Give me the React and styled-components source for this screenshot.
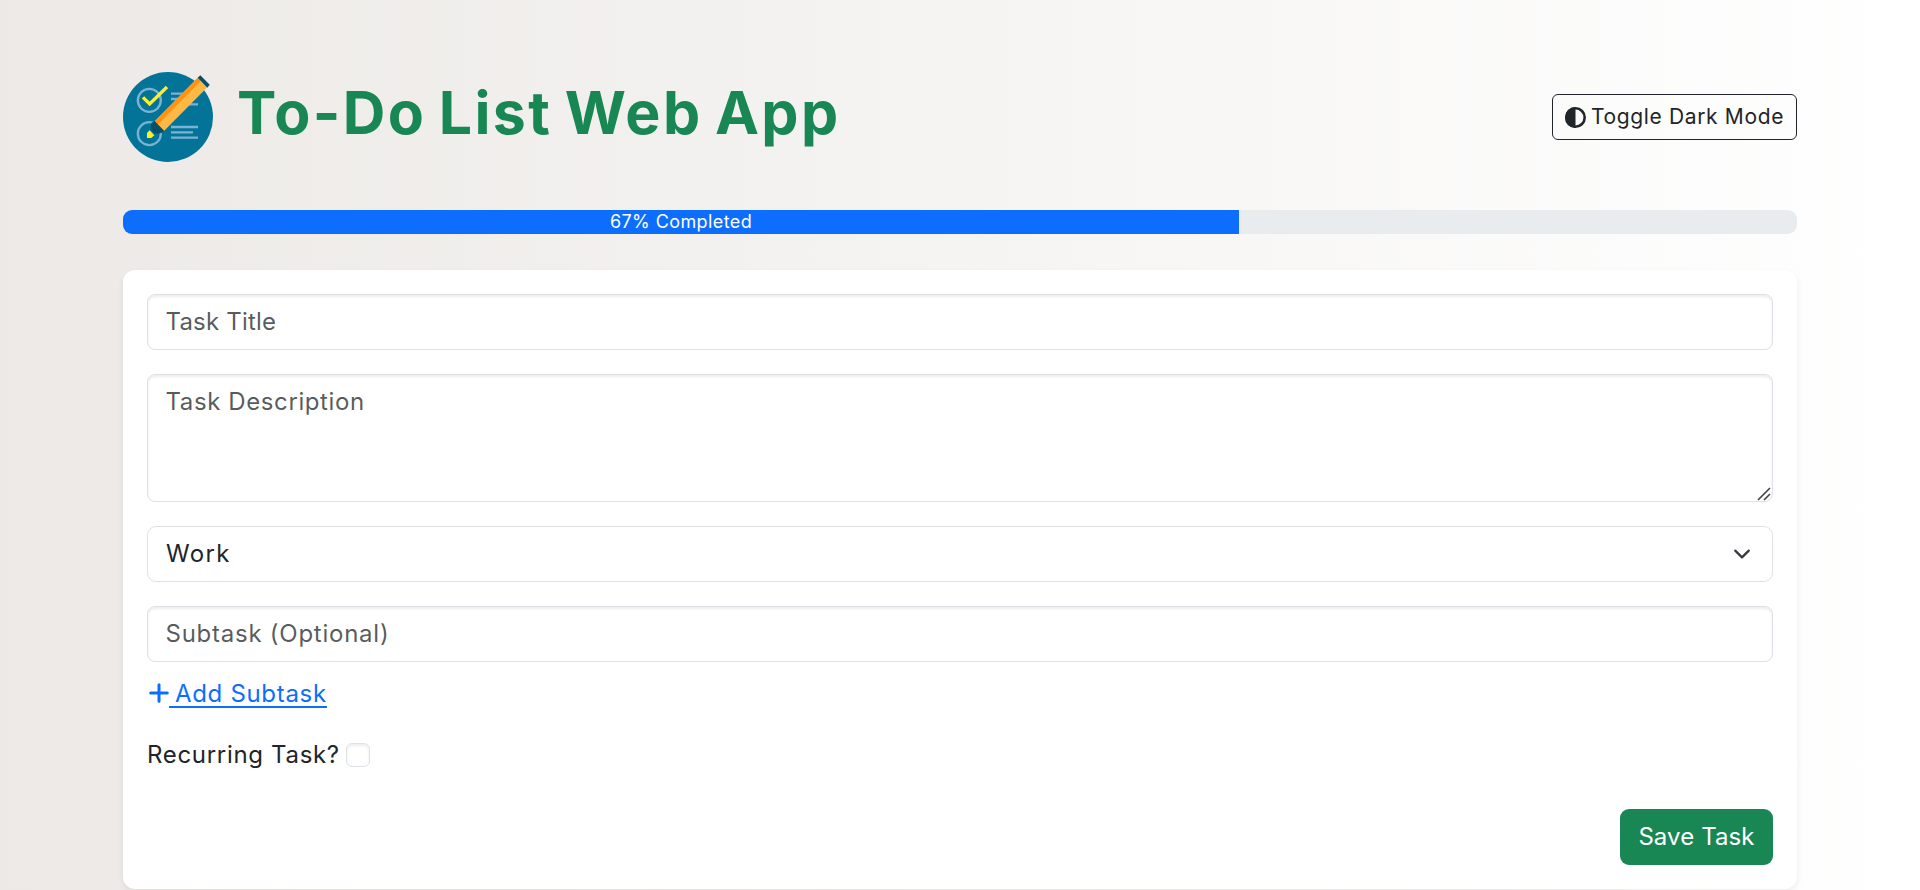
import React from 'react';
import styled, { createGlobalStyle } from 'styled-components';

const GlobalStyle = createGlobalStyle`
  *, *::before, *::after { box-sizing: border-box; }
  html, body { margin: 0; height: 100%; overflow: hidden; }
  body {
    font-family: Inter, "Open Sans", sans-serif;
    font-size: 24px;
    font-weight: 400;
    line-height: 36px;
    color: #212529;
    background: linear-gradient(to right, #ece9e6, #ffffff);
    min-height: 890px;
  }
`;

const Container = styled.div`
  width: 1674px;
  margin: 0 auto;
  padding-top: 72px;
`;

const Header = styled.header`
  display: flex;
  align-items: center;
  justify-content: space-between;
  height: 90px;
  margin-bottom: 48px;
`;

const Brand = styled.div`
  display: flex;
  align-items: center;
  gap: 24px;
`;

const Title = styled.h1`
  margin: 0 0 8px;
  font-size: 59px;
  font-weight: 700;
  line-height: 72px;
  letter-spacing: 2.4px;
  word-spacing: -4px;
  color: #198754;
`;

const ToggleButton = styled.button`
  display: flex;
  align-items: center;
  gap: 5px;
  width: 245px;
  height: 46px;
  padding: 0 0 0 12px;
  border: 1px solid #212529;
  border-radius: 6px;
  background: transparent;
  color: #212529;
  font: inherit;
  font-size: 21px;
  letter-spacing: 0.64px;
  white-space: nowrap;
`;

const Progress = styled.div`
  height: 24px;
  margin-bottom: 36px;
  border-radius: 9px;
  background: #e9ecef;
  overflow: hidden;
`;

const ProgressBar = styled.div`
  display: flex;
  align-items: center;
  justify-content: center;
  height: 100%;
  background: #0d6efd;
  color: #fff;
  font-size: 18px;
  letter-spacing: 0.4px;
`;

const Card = styled.form`
  display: flex;
  flex-direction: column;
  height: 619px;
  padding: 24px;
  border-radius: 12px;
  background: #fff;
  box-shadow: 0 3px 6px rgba(0, 0, 0, 0.075);
`;

const Field = styled.div`
  position: relative;
  display: flex;
  margin-bottom: ${(p) => p.$gap ?? 24}px;
`;

const Input = styled.input`
  flex: 1;
  height: ${(p) => p.$height ?? 56}px;
  padding: 9px 18px 10px 17.5px;
  border: 1px solid #dee2e6;
  border-radius: 8px;
  background: #fff;
  box-shadow: inset 0 2px 3px rgba(0, 0, 0, 0.075);
  color: #212529;
  font: inherit;
  letter-spacing: ${(p) => p.$track}px;
  resize: none;
  outline: none;
  &::placeholder { color: rgba(33, 37, 41, 0.75); opacity: 1; }
`;

const Grip = styled.svg`
  position: absolute;
  right: 2px;
  bottom: 1px;
`;

const Select = styled.div`
  display: flex;
  flex: 1;
  align-items: center;
  justify-content: space-between;
  height: 56px;
  padding: 0 21px 0 18px;
  border: 1px solid #dee2e6;
  border-radius: 9px;
  letter-spacing: 1.3px;
`;

const AddLink = styled.a`
  display: flex;
  align-items: center;
  align-self: flex-start;
  height: 36px;
  padding-left: 2px;
  color: #0d6efd;
  letter-spacing: 0.68px;
`;

const LinkText = styled.span`
  padding: 1px 0 0 6px;
  line-height: 28px;
  background: linear-gradient(#0d6efd, #0d6efd) 0 100% / 100% 2px no-repeat;
`;

const CheckRow = styled.label`
  display: flex;
  align-items: center;
  gap: 6px;
  height: 36px;
  margin: 26px 0 36px;
  letter-spacing: 0.68px;
`;

const CheckBox = styled.input`
  appearance: none;
  width: 24px;
  height: 24px;
  margin: 0;
  border: 1px solid #dee2e6;
  border-radius: 6px;
  box-shadow: inset 0 2px 3px rgba(0, 0, 0, 0.075);
`;

const SaveButton = styled.button`
  align-self: flex-end;
  width: 153px;
  height: 56px;
  padding: 0;
  border: 0;
  border-radius: 9px;
  background: #198754;
  color: #fff;
  font: inherit;
  letter-spacing: 0.1px;
`;

const Logo = () => (
  <svg width="90" height="90" viewBox="0 0 270 270">
    <circle cx="135" cy="135" r="135" fill="#047398" />
    <g fill="none" stroke="#79b3d2" strokeWidth="7">
      <circle cx="79" cy="85" r="34.5" />
      <circle cx="79" cy="185" r="34.5" />
      <path d="M144 65h38M144 81h24M185 97h40M144 165h81M144 181h66M144 197h81" />
    </g>
    <path d="M60 76l20 20 52-51" fill="none" stroke="#ffee25" strokeWidth="10" />
    <path d="M224 17L95 148l28 29L253 46z" fill="#ffb844" />
    <path d="M224 17L95 148l9 10L233 27z" fill="#ff920e" />
    <path d="M224 17l8-7 28 28-7 9z" fill="#07506a" />
    <path d="M95 147l28 29-8 7-20 2-13-13 3-19z" fill="#07506a" />
    <path d="M80 175l14 15-9 8H72v-15z" fill="#ffee25" />
  </svg>
);

const ContrastIcon = () => (
  <svg width="21" height="21" viewBox="0 0 21 21">
    <circle cx="10.5" cy="10.5" r="9.2" fill="none" stroke="currentColor" strokeWidth="2.6" />
    <path d="M10.5 0a10.5 10.5 0 0 0 0 21z" fill="currentColor" />
  </svg>
);

const Chevron = () => (
  <svg width="18" height="18" viewBox="0 0 16 16" fill="none" stroke="#343a40" strokeWidth="2" strokeLinecap="round" strokeLinejoin="round">
    <path d="m2 5 6 6 6-6" />
  </svg>
);

const PlusIcon = () => (
  <svg width="20" height="20" viewBox="0 0 20 20" stroke="#0d6efd" strokeWidth="3" strokeLinecap="round">
    <path d="M10 1.7v16.6M1.7 10h16.6" />
  </svg>
);

export default function App() {
  const percent = 66.67;
  return (
    <>
      <GlobalStyle />
      <Container>
        <Header>
          <Brand>
            <Logo />
            <Title>To-Do List Web App</Title>
          </Brand>
          <ToggleButton type="button">
            <ContrastIcon />
            Toggle Dark Mode
          </ToggleButton>
        </Header>
        <Progress>
          <ProgressBar style={{ width: `${percent}%` }}>67% Completed</ProgressBar>
        </Progress>
        <Card>
          <Field>
            <Input placeholder="Task Title" $track={0.2} />
          </Field>
          <Field>
            <Input as="textarea" placeholder="Task Description" $height={128} $track={0.6} />
            <Grip width="14" height="14" viewBox="0 0 14 14" stroke="#444" strokeWidth="1.6">
              <path d="M1 13L13 1M7 13l6-6" />
            </Grip>
          </Field>
          <Field>
            <Select>
              Work
              <Chevron />
            </Select>
          </Field>
          <Field $gap={13}>
            <Input placeholder="Subtask (Optional)" $track={0.75} />
          </Field>
          <AddLink>
            <PlusIcon />
            <LinkText>Add Subtask</LinkText>
          </AddLink>
          <CheckRow>
            Recurring Task?
            <CheckBox type="checkbox" />
          </CheckRow>
          <SaveButton type="button">Save Task</SaveButton>
        </Card>
      </Container>
    </>
  );
}
